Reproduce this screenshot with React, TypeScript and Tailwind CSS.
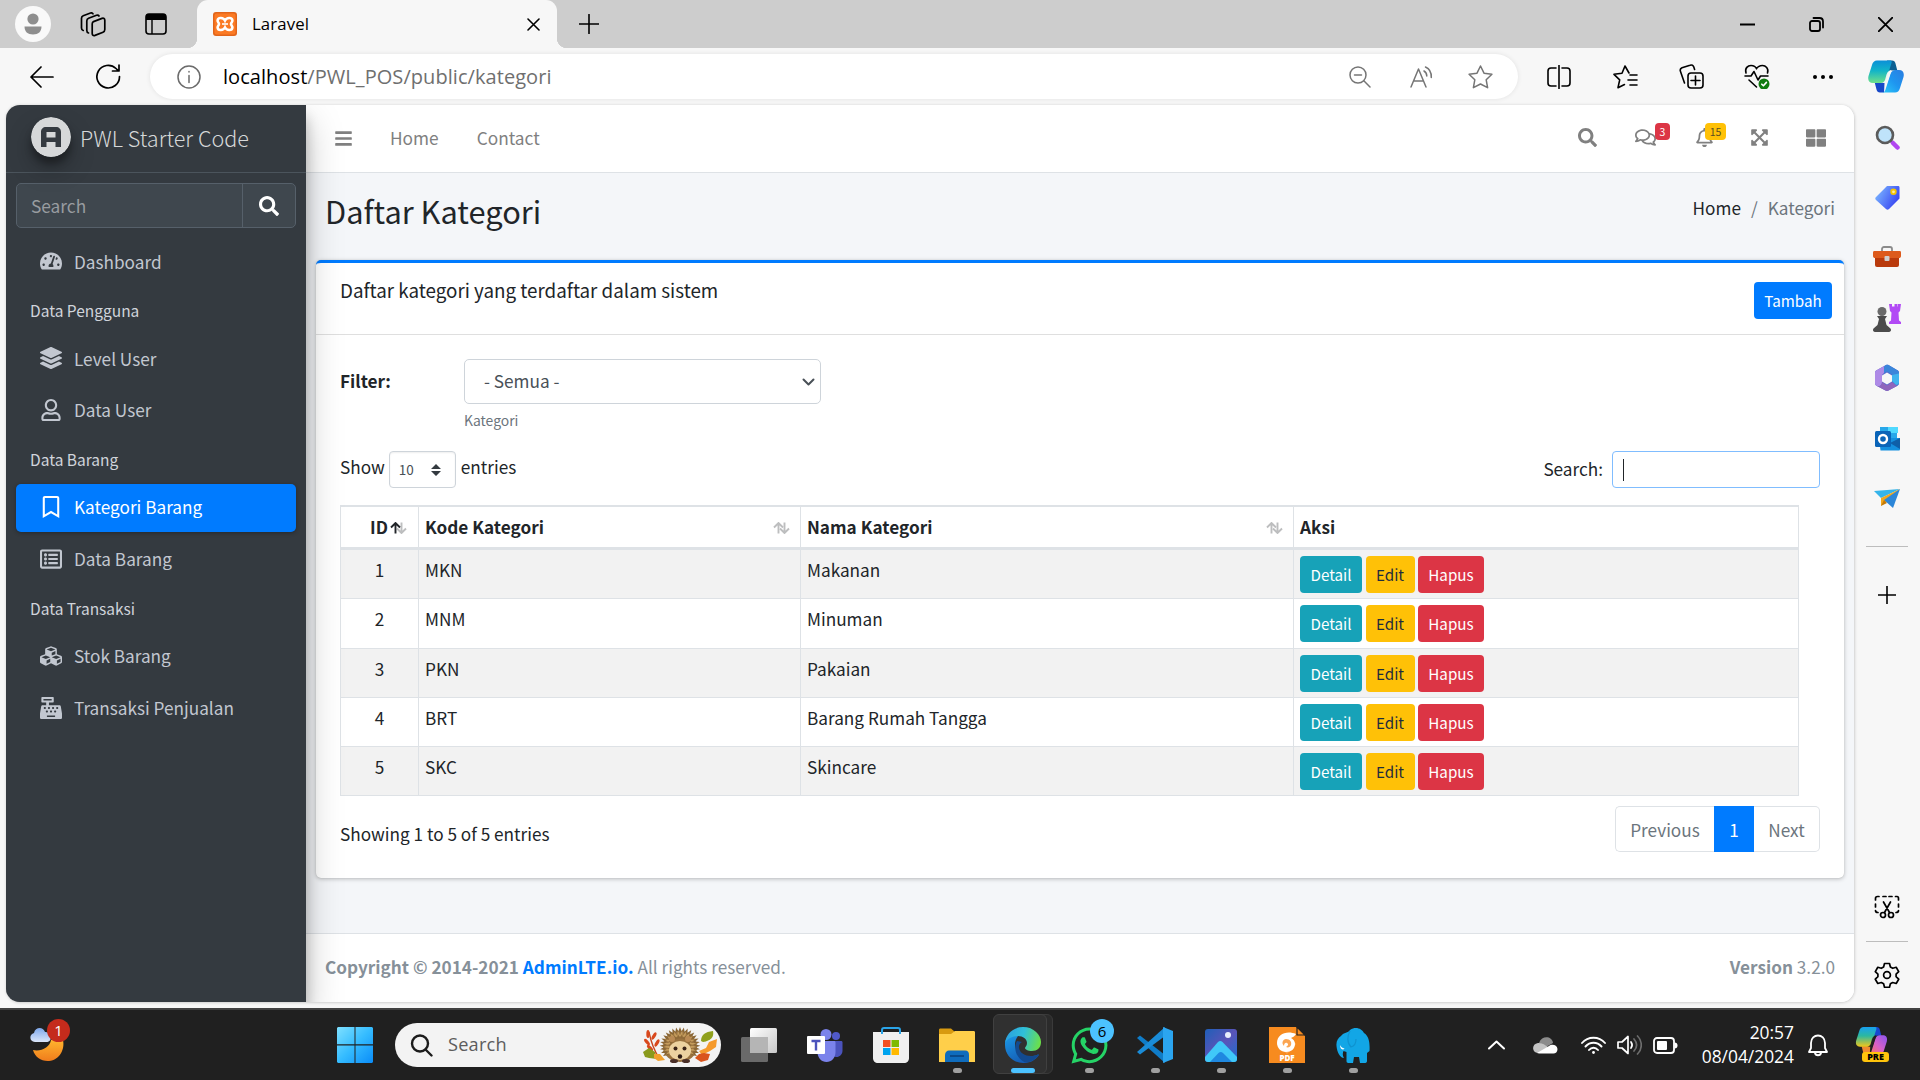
import type { ReactNode } from "react";
import {
  FaBars, FaSearch, FaRegComments, FaRegBell, FaExpandArrowsAlt, FaThLarge, FaTachometerAlt,
  FaLayerGroup, FaRegUser, FaRegBookmark, FaRegListAlt, FaCubes, FaCashRegister, FaWhatsapp,
} from "react-icons/fa";

type SvgProps = { w: number; h: number; vb?: string; sw?: number; className?: string; children: ReactNode };

function Line({ w, h, vb, sw = 1.5, className, children }: SvgProps) {
  return (
    <svg width={w} height={h} viewBox={vb ?? `0 0 ${w} ${h}`} fill="none" stroke="currentColor" strokeWidth={sw}
      strokeLinecap="round" strokeLinejoin="round" className={className}>
      {children}
    </svg>
  );
}

function Copilot({ w, h, id, warm }: { w: number; h: number; id: string; warm?: boolean }) {
  return (
    <svg width={w} height={h} viewBox="0 0 36 32">
      <defs>
        <linearGradient id={`${id}a`} x1="0" y1="0" x2="0" y2="1">
          <stop offset="0" stopColor={warm ? "#18a0f0" : "#0a8fd8"} />
          <stop offset="0.45" stopColor={warm ? "#2bb8a0" : "#12b4c8"} />
          <stop offset="1" stopColor={warm ? "#f2c81a" : "#6fe08a"} />
        </linearGradient>
        <linearGradient id={`${id}b`} x1="1" y1="0" x2="0" y2="1">
          <stop offset="0" stopColor={warm ? "#8a55f0" : "#2b7de0"} />
          <stop offset="0.5" stopColor={warm ? "#d860c8" : "#1e96f0"} />
          <stop offset="1" stopColor={warm ? "#ff7a4a" : "#2cc8f8"} />
        </linearGradient>
      </defs>
      <path d="M19 0h5c2 0 3 1 3.500 3l1.800 7h-6c-2 0-3 1-4 3z" fill={warm ? "#1648d0" : "#0c5f92"} />
      <path d="M16 32h-4c-2 0-3-1-3.500-3l-1.800-7h6c2 0 3-1 4-3z" fill={warm ? "#f08a30" : "#1748c8"} />
      <path d="M9 0h13c1.500 0 2 1 1.500 2.500l-5 16c-1 3-3 4-5 4H5c-4 0-5.500-3-4.500-7L4 4.500C4.800 1.500 6.500 0 9 0z" fill={`url(#${id}a)`} />
      <path d="M27 32H14c2 0 3-1 3.500-3l5-15.500c1-3 3-4 5-4H31c4 0 5.500 3 4.500 7L32 27.500c-.8 3-2.500 4.500-5 4.500z" fill={`url(#${id}b)`} />
      <path d="M18.500 14c1-3 3-4.500 5-4.500l-4.500 13H13c2 0 3.500-1.500 4-3z" fill={warm ? "#202020" : "#f7f7f7"} opacity={0.95} />
    </svg>
  );
}

function TitleBar() {
  return (
    <div className="flex h-12 items-center bg-[#cdcdcd] text-black">
      <div className="flex w-[197px] items-center">
        <svg width="36" height="36" viewBox="0 0 36 36" className="ml-[15px]">
          <circle cx="18" cy="18" r="18" fill="#f9f9f9" />
          <circle cx="18" cy="13" r="5.600" fill="#8e8e8e" />
          <path d="M9.500 20.500h17c0 5-3 8-8.500 8s-8.500-3-8.500-8z" fill="#8e8e8e" />
        </svg>
        <Line w={26} h={25} className="ml-[29px]" sw={1.700}>
          <path d="M13.500 9.600l8.500-3.200c1.700-.6 2.800.2 2.800 1.900v9.200c0 1.300-.6 2.200-1.800 2.700l-8 3.200c-1.700.6-2.800-.2-2.800-1.900V12c0-1.200.3-2 1.300-2.400z" />
          <path d="M8.500 21c-1-.3-1.700-1.200-1.700-2.500V9c0-1.300.6-2.200 1.800-2.700L16.500 3.200c1-.3 2-.1 2.500.8M3.200 18.500c-1-.3-1.700-1.200-1.700-2.500V6.200C1.500 5 2 4.200 3.200 3.700L10.500 1c1-.3 2-.1 2.500.8" />
        </Line>
        <svg width="22" height="22" viewBox="0 0 22 22" className="ml-[39px]">
          <rect x="1" y="1" width="20" height="20" rx="3" fill="none" stroke="#000" strokeWidth="1.600" />
          <path d="M1 7V3.500C1 2 2 1 3.500 1h15C20 1 21 2 21 3.500V7zM6.300 7h1.400v14H6.300z" />
        </svg>
      </div>
      <div className="relative flex h-12 w-[360px] items-center rounded-t-[11px] bg-[#f7f7f7]">
        <span className="absolute bottom-0 -left-[10px] size-[10px] bg-[radial-gradient(circle_at_0_0,transparent_10px,#f7f7f7_10.5px)]" />
        <span className="absolute -right-[10px] bottom-0 size-[10px] bg-[radial-gradient(circle_at_100%_0,transparent_10px,#f7f7f7_10.5px)]" />
        <svg width="24" height="24" viewBox="0 0 24 24" className="ml-4">
          <rect width="24" height="24" rx="3" fill="#e2651a" />
          <rect x="1.500" y="1.500" width="21" height="21" rx="2" fill="#fb7a24" />
          <g fill="none" stroke="#fff" strokeWidth="2.600">
            <path d="M12 8.500C10.500 5.500 5 5 4.600 8.400c-.1 2 1.400 2.200 1.400 3.600s-1.500 1.700-1.400 3.600C5 19 10.500 18.500 12 15.500c1.500 3 7 3.500 7.400.1.100-1.900-1.400-2.200-1.400-3.600s1.500-1.600 1.400-3.600C19 5 13.500 5.500 12 8.500z" />
            <path d="M9 12h6" strokeWidth="1.600" />
          </g>
        </svg>
        <span className="ml-[15px] text-[16.800px] tracking-[0.1px]">Laravel</span>
        <Line w={13} h={13} className="mr-[17px] ml-auto" sw={1.600}><path d="M1 1l11 11M12 1L1 12" /></Line>
      </div>
      <Line w={20} h={20} className="ml-[22px]" sw={1.600}><path d="M10 .5v19M.5 10h19" /></Line>
      <div className="ml-auto flex">
        <span className="flex w-[69px] items-center justify-center"><Line w={15} h={15} sw={1.800}><path d="M0 7.500h15" /></Line></span>
        <span className="flex w-[69px] items-center justify-center">
          <Line w={15} h={15} sw={1.800}><rect x="1" y="4" width="10" height="10" rx="2" /><path d="M4.500 1h6C13 1 14 2.500 14 4.500v6" /></Line>
        </span>
        <span className="flex w-[69px] items-center justify-center"><Line w={15} h={15} sw={1.800}><path d="M.5.500l14 14M14.500.500l-14 14" /></Line></span>
      </div>
    </div>
  );
}

function Slot({ children, className }: { children: ReactNode; className: string }) {
  return <span className={`flex items-center justify-center ${className}`}>{children}</span>;
}

function AddressBar() {
  return (
    <div className="flex h-[57px] items-center text-black">
      <Line w={25} h={22} className="ml-[29px]" sw={1.700}><path d="M24 11H2M12 1L2 11l10 10" /></Line>
      <Line w={25} h={25} className="ml-[42px]" sw={1.700}><path d="M23.500 12.500A11.300 11.300 0 1 1 20 4.500l2.500 2.300M23 1v6h-6.500" /></Line>
      <div className="ml-[29px] flex h-[45px] w-[1368px] items-center rounded-full bg-white pr-2 shadow-[0_0_5px_rgba(0,0,0,0.09)]">
        <Line w={24} h={24} className="ml-[27px] text-[#6b6b6b]" sw={1.500}><circle cx="12" cy="12" r="11" /><path d="M12 10.500v7M12 6.600v.3" /></Line>
        <span className="ml-[22px] text-[20px] tracking-[0.06px] text-[#6f6f6f]"><span className="text-black">localhost</span>/PWL_POS/public/kategori</span>
        <div className="ml-auto flex text-[#757575]">
          <Slot className="w-[60px]"><Line w={22} h={22} sw={1.500}><circle cx="9" cy="9" r="8" /><path d="M14.800 14.800L21 21M5.500 9h7" /></Line></Slot>
          <Slot className="w-[60px] pl-1"><Line w={24} h={22} sw={1.500}><path d="M1 21L8.500 3 16 21M3.800 15h9.500M14 5c1.700 1 2.700 2.500 2.800 5M15.500 1c3.500 1.500 6 5 5.800 10.500" /></Line></Slot>
          <Slot className="w-[60px]"><Line w={25} h={24} vb="0 0 25 24" sw={1.500}><path d="M12.500 1l3.500 7.200 7.900 1.100-5.700 5.500 1.400 7.900-7.100-3.700-7.100 3.700 1.400-7.900L1.100 9.300 9 8.200z" /></Line></Slot>
        </div>
      </div>
      <div className="ml-[8px] flex">
        <Slot className="w-[66px]"><Line w={24} h={24} sw={1.600}><path d="M9 3H4C2 3 1 4 1 6v12c0 2 1 3 3 3h5M15 3h5c2 0 3 1 3 3v12c0 2-1 3-3 3h-5M12 .5v23" /></Line></Slot>
        <Slot className="w-[66px]"><Line w={25} h={24} sw={1.600}><path d="M16 8L12 1 9 8.200 1 9.300l5.700 5.500L5 22.700l6.500-3.200M17 10h7M15 15h9M17 20h7" /></Line></Slot>
        <Slot className="w-[66px]"><Line w={25} h={25} sw={1.600}><rect x="9" y="9" width="15" height="15" rx="3" /><path d="M16.500 12v9M12 16.500h9M5.500 19L1.500 7.500c-.8-2 0-3 1.500-3.700L11 1.200c2-.7 3.200 0 3.800 1.800l.8 2.500" /></Line></Slot>
        <Slot className="w-[66px]">
          <Line w={26} h={25} sw={1.600}>
            <path d="M2 9C.5 4 4 1.500 7 1.500c3 0 5 2 5.500 3.300C13 3.500 15.500 1.500 18.500 1.500c3 0 6.500 3 5 7.500M1 12h6l3-4.500L14 16l2.500-4H24M5 16l7.500 7" />
            <circle cx="20" cy="20" r="5.500" fill="#107c10" stroke="none" />
            <path d="M17.800 20.200l1.600 1.600 3-3.400" stroke="#fff" />
          </Line>
        </Slot>
        <Slot className="w-[66px]"><svg width="22" height="6" viewBox="0 0 22 6"><circle cx="3" cy="3" r="2" /><circle cx="11" cy="3" r="2" /><circle cx="19" cy="3" r="2" /></svg></Slot>
        <Slot className="w-[60px]"><Copilot w={36} h={33} id="top" /></Slot>
      </div>
    </div>
  );
}

function NavItem({ icon, label, active }: { icon: ReactNode; label: string; active?: boolean }) {
  return (
    <div className={`mb-[3.8px] flex h-12 items-center rounded-[5px] pl-[19px] text-[17.200px] ${active ? "bg-[#007bff] text-white shadow-[0_1px_4px_rgba(0,0,0,0.3)]" : "text-[#c2c7d0]"}`}>
      <span className="flex w-8 justify-center pb-0.5 text-[22px]">{icon}</span>
      <span className="ml-[7px] pb-px leading-6">{label}</span>
    </div>
  );
}

function NavHeader({ label }: { label: string }) {
  return <div className="flex h-[45.3px] items-center pb-[3px] pl-[14px] text-[15.5px] text-[#d0d4db]">{label}</div>;
}

function Sidebar() {
  return (
    <aside className="relative z-10 h-[897px] w-[300px] bg-[#343a40] shadow-[0_17px_34px_rgba(0,0,0,0.25),0_12px_12px_rgba(0,0,0,0.22)]">
      <div className="flex h-[68px] items-center border-b border-[#4b545c] pl-[25px]">
        <svg width="40" height="40" viewBox="0 0 40 40" className="-mt-1 rounded-full shadow-[0_12px_24px_rgba(0,0,0,0.25),0_7px_7px_rgba(0,0,0,0.3)]">
          <circle cx="20" cy="20" r="20" fill="#d6d8d9" />
          <path d="M10 30V15c0-3 2-5 5-5h10c3 0 5 2 5 5v15h-5.500v-5h-9v5zM15.500 20.500h9V15h-9z" fill="#343a40" fillRule="evenodd" />
        </svg>
        <span className="ml-[9px] text-[21.600px] font-light text-[#d6d8d9]">PWL Starter Code</span>
      </div>
      <div className="px-[10px] pt-[10px]">
        <div className="mb-[10px] flex h-[45px] rounded-[5px] border border-[#56606a] bg-[#3f474e]">
          <span className="flex-1 self-center pl-[14px] text-[17.300px] text-[#989ca0]">Search</span>
          <span className="flex w-[53px] items-center justify-center border-l border-[#56606a] text-[20px] text-white"><FaSearch /></span>
        </div>
        <NavItem icon={<FaTachometerAlt />} label="Dashboard" />
        <NavHeader label="Data Pengguna" />
        <NavItem icon={<FaLayerGroup />} label="Level User" />
        <NavItem icon={<FaRegUser />} label="Data User" />
        <NavHeader label="Data Barang" />
        <NavItem icon={<FaRegBookmark />} label="Kategori Barang" active />
        <NavItem icon={<FaRegListAlt />} label="Data Barang" />
        <NavHeader label="Data Transaksi" />
        <NavItem icon={<FaCubes />} label="Stok Barang" />
        <NavItem icon={<FaCashRegister />} label="Transaksi Penjualan" />
      </div>
    </aside>
  );
}

function NavBar() {
  return (
    <div className="flex h-[68px] items-center border-b border-[#dee2e6] bg-white text-[17.300px] text-[#808080]">
      <FaBars className="ml-[28px] text-[19px]" />
      <span className="ml-[37px] pb-px">Home</span>
      <span className="ml-[38px] pb-px">Contact</span>
      <div className="ml-auto flex items-center pr-[28px] pb-0.5 text-[19px]">
        <FaSearch />
        <span className="relative ml-[38px]">
          <FaRegComments className="text-[21px]" />
          <span className="absolute -top-[4px] left-[20px] flex h-[17px] w-[15px] items-center justify-center rounded-[4px] bg-[#dc3545] text-[10.500px] text-white">3</span>
        </span>
        <span className="relative ml-[39px]">
          <FaRegBell />
          <span className="absolute -top-[5px] left-[10px] flex h-[17px] w-[21px] items-center justify-center rounded-[4px] bg-[#ffc107] text-[10.500px] text-[#5a5020]">15</span>
        </span>
        <FaExpandArrowsAlt className="ml-[36px]" />
        <FaThLarge className="ml-[37px] text-[20px]" />
      </div>
    </div>
  );
}

function SortArrows({ asc }: { asc?: boolean }) {
  return (
    <svg width="17" height="12" viewBox="0 0 17 12" fill="none" strokeWidth="1.900" className="relative top-px">
      <path d="M11.500 .5v10M7 6.500l4.500 4.500 4.500-4.500" stroke="#bdbebf" />
      <path d="M5.500 11.500v-10M1 5.500L5.500 1 10 5.500" stroke={asc ? "#212529" : "#bdbebf"} />
    </svg>
  );
}

const rows = [
  ["1", "MKN", "Makanan"],
  ["2", "MNM", "Minuman"],
  ["3", "PKN", "Pakaian"],
  ["4", "BRT", "Barang Rumah Tangga"],
  ["5", "SKC", "Skincare"],
];

function DataTable() {
  const cell = "border-r border-[#dee2e6]";
  return (
    <div className="w-[1459px] border-t-2 border-l border-[#dee2e6]">
      <div className="grid h-[43px] grid-cols-[78px_382px_493px_505px] border-b-[3px] border-[#dee2e6] text-[17.200px] font-bold">
        <div className={`${cell} flex items-center justify-end pr-[11px]`}>ID<span className="ml-0.5"><SortArrows asc /></span></div>
        <div className={`${cell} flex items-center justify-between pr-[10px] pl-[6px]`}>Kode Kategori<SortArrows /></div>
        <div className={`${cell} flex items-center justify-between pr-[10px] pl-[6px]`}>Nama Kategori<SortArrows /></div>
        <div className={`${cell} flex items-center pl-[6px]`}>Aksi</div>
      </div>
      {rows.map(([id, code, name]) => (
        <div key={id} className="grid h-[49.3px] grid-cols-[78px_382px_493px_505px] border-b border-[#dee2e6] odd:bg-white even:bg-[#f2f2f2]">
          <div className={`${cell} pt-[8px] text-center leading-6`}>{id}</div>
          <div className={`${cell} pt-[8px] pl-[6px] leading-6`}>{code}</div>
          <div className={`${cell} pt-[8px] pl-[6px] leading-6`}>{name}</div>
          <div className={`${cell} flex gap-[3.500px] pt-[6px] pl-[6px] text-[15.200px]`}>
            <span className="flex h-[37px] w-[62px] items-center justify-center rounded-[4px] bg-[#17a2b8] text-white">Detail</span>
            <span className="flex h-[37px] w-[49px] items-center justify-center rounded-[4px] bg-[#ffc107] text-[#1f2d3d]">Edit</span>
            <span className="flex h-[37px] w-[66px] items-center justify-center rounded-[4px] bg-[#dc3545] text-white">Hapus</span>
          </div>
        </div>
      ))}
    </div>
  );
}

function MainContent() {
  return (
    <main className="flex h-[897px] flex-1 flex-col bg-[#f4f6f9] text-[17.200px] text-[#212529]">
      <NavBar />
      <div className="flex h-[87px] justify-between px-[19px]">
        <h1 className="pt-[15px] text-[30.800px] leading-[46px]">Daftar Kategori</h1>
        <div className="pt-[23px] leading-6 text-[#6c757d]"><span className="text-[#212529]">Home</span><span className="px-[10px]">/</span>Kategori</div>
      </div>
      <section className="mr-[10px] ml-[10px] h-[618px] rounded-[5px] border-t-[3px] border-[#007bff] bg-white shadow-[0_0_1px_rgba(0,0,0,0.15),0_1px_4px_rgba(0,0,0,0.25)]">
        <div className="flex h-[72px] justify-between border-b border-[#dfdfdf] pr-[12px] pl-[24px]">
          <span className="pt-[15px] text-[18.800px] leading-6">Daftar kategori yang terdaftar dalam sistem</span>
          <span className="mt-[19px] flex h-[37px] w-[78px] items-center justify-center rounded-[4px] bg-[#007bff] pb-px text-[15.200px] text-white">Tambah</span>
        </div>
        <div className="pr-[24px] pl-[24px] pt-[24px]">
          <div className="flex">
            <span className="w-[124px] pt-[10px] font-bold leading-6">Filter:</span>
            <div>
              <div className="flex h-[45px] w-[357px] items-center justify-between rounded-[5px] border border-[#ced4da] pr-[5px] pl-[19px] text-[#495057]">
                <span className="pb-px">- Semua -</span>
                <Line w={13} h={8} sw={2}><path d="M1.500 1.500l5 5 5-5" /></Line>
              </div>
              <div className="pt-[4px] text-[13.900px] leading-6 text-[#6c757d]">Kategori</div>
            </div>
          </div>
          <div className="mt-[19px] flex h-[37px]">
            <span className="pt-[4px] leading-6">Show</span>
            <div className="ml-[4px] flex w-[67px] items-center justify-between rounded-[4px] border border-[#ced4da] pr-[14px] pl-[9px] text-[13.500px] text-[#495057] shadow-[inset_0_1px_2px_rgba(0,0,0,0.07)]">
              10
              <svg width="10" height="12" viewBox="0 0 10 12" fill="#343a40"><path d="M0 5L5 0l5 5zM0 7l5 5 5-5z" /></svg>
            </div>
            <span className="ml-[5px] pt-[4px] leading-6">entries</span>
            <span className="ml-auto pt-[6px] leading-6">Search:</span>
            <div className="ml-[9px] flex w-[208px] items-center rounded-[4px] border border-[#80bdff] pl-[10px]">
              <span className="h-[22px] w-px bg-[#212529]" />
            </div>
          </div>
          <div className="mt-[17px]"><DataTable /></div>
          <div className="mt-[10px] flex justify-between">
            <span className="pt-[16px] leading-6">Showing 1 to 5 of 5 entries</span>
            <div className="flex h-[46px] text-[#6c757d]">
              <span className="flex w-[99px] items-center justify-center rounded-l-[5px] border border-r-0 border-[#dee2e6]">Previous</span>
              <span className="flex w-[40px] items-center justify-center bg-[#007bff] text-white">1</span>
              <span className="flex w-[66px] items-center justify-center rounded-r-[5px] border border-l-0 border-[#dee2e6]">Next</span>
            </div>
          </div>
        </div>
      </section>
      <footer className="mt-auto flex h-[69px] items-center justify-between border-t border-[#dee2e6] bg-white px-[19px] pb-0.5 text-[#869099]">
        <span><b>Copyright © 2014-2021 <span className="text-[#007bff]">AdminLTE.io.</span></b> All rights reserved.</span>
        <span><b>Version</b> 3.2.0</span>
      </footer>
    </main>
  );
}

function EdgeSidebar() {
  return (
    <div className="flex w-[64px] flex-col items-center pt-[2px] pb-[20px]">
      <div className="flex flex-col items-center [&>span]:h-[60.2px]">
        <Slot className="w-12">
          <svg width="25" height="25" viewBox="0 0 25 25">
            <path d="M15.500 15.500l2 2" stroke="#555" strokeWidth="3" />
            <path d="M18 18l4.500 4.500" stroke="#b146f0" strokeWidth="4.500" strokeLinecap="round" />
            <circle cx="10" cy="10" r="8" fill="#bfe3fa" stroke="#5b5b5b" strokeWidth="2.600" />
          </svg>
        </Slot>
        <Slot className="w-12">
          <svg width="25" height="25" viewBox="0 0 25 25">
            <defs><linearGradient id="tag" x1="0" y1="0.300" x2="1" y2="0.800"><stop stopColor="#7ab4ff" /><stop offset="1" stopColor="#3038f0" /></linearGradient></defs>
            <path d="M12 1h11c1 0 1.500.5 1.500 1.500v11L14 24c-1 1-2 1-3 0L1 15c-1-1-1-2 0-3z" fill="url(#tag)" />
            <circle cx="18.500" cy="6.800" r="2.300" fill="#ffe9a0" stroke="#f5c400" strokeWidth="1.800" />
          </svg>
        </Slot>
        <Slot className="w-12">
          <svg width="28" height="22" viewBox="0 0 28 22">
            <path d="M9 6V3c0-1 .8-2 2-2h6c1.200 0 2 1 2 2v3" fill="none" stroke="#8b8b8b" strokeWidth="1.800" />
            <rect x="2" y="8" width="24" height="13" rx="2" fill="#b93a0c" />
            <path d="M0 6.500C0 5.500.5 5 1.500 5h25c1 0 1.500.5 1.500 1.500V10c0 1.500-1 2-2 2H2c-1 0-2-.5-2-2z" fill="#dd5a1c" />
            <rect x="11.500" y="10" width="5" height="5" rx="1" fill="#d0d0d0" />
          </svg>
        </Slot>
        <Slot className="w-12">
          <svg width="28" height="28" viewBox="0 0 28 28">
            <path d="M16 0h3v2.500h2.500V0h3v2.500H25V0h3l-1 7-1.500 1.500.5 8 2 1.500v2H16v-2l2-1.500.5-8L17 7z" fill="#b24af5" />
            <circle cx="9" cy="7.500" r="4.500" fill="#6a6a6a" />
            <path d="M4 12h10l-2 3 1.500 6 4 3.500c1 1.500.5 3.500-1.500 3.500H2c-2 0-2.500-2-1.500-3.500l4-3.500L6 15z" fill="#4c4c4c" />
          </svg>
        </Slot>
        <Slot className="w-12">
          <svg width="26" height="28" viewBox="0 0 26 28">
            <path d="M12 1c1-.5 1.500-.5 2.500 0L23 6c1.500.8 2 1.700 2 3v10c0 1.300-.6 2.200-2 3l-8.500 4.500c-1 .5-2 .5-3 0L3 22c-1.400-.8-2-1.700-2-3V9c0-1.300.5-2.200 2-3z" fill="#5568cc" />
            <path d="M12 1L3 6C1.500 6.800 1 7.700 1 9v10c0 1.300.6 2.200 2 3 3 1 5-1 5-4v-6c0-1.300.6-2 2-3V4c0-1.500.7-2.300 2-3z" fill="#ae8ae6" />
            <path d="M12 1c-1.300.7-2 1.500-2 3v5l3-1.500 5 3V17l5 4.500c1.500-.8 2-1.500 2-2.500V9c0-1.300-.5-2.200-2-3l-8.500-5c-1-.5-1.500-.5-2.500 0z" fill="#3a86da" />
            <path d="M18 11v6l4 4c2-.5 3-1 3-3V9.500z" fill="#3fb4ee" />
            <path d="M3 22c4 .8 5-2 5-4l5 3.500 5-3.500 5 4-8.500 4.500c-1 .5-2 .5-3 0z" fill="#8f66bc" />
            <path d="M13 8.500l5 3v6l-5 3-5-3v-6z" fill="#f7f7f7" />
          </svg>
        </Slot>
        <Slot className="w-12">
          <svg width="25" height="25" viewBox="0 0 25 25">
            <path d="M5 1h17v12H5z" fill="#28a8ea" /><path d="M13 1h10v6H13z" fill="#50d9ff" />
            <path d="M4 12h21v11c0 1-.5 1.500-1.500 1.500h-18z" fill="#1490df" /><path d="M25 12v11L15 17z" fill="#0f5fa8" />
            <rect y="5" width="16" height="16" rx="1.500" fill="#0a64b8" />
            <circle cx="8" cy="13" r="4" fill="none" stroke="#fff" strokeWidth="2.400" />
          </svg>
        </Slot>
        <Slot className="w-12">
          <svg width="26" height="20" viewBox="0 0 26 20">
            <path d="M26 1L0 3l7 7z" fill="#35b4ea" /><path d="M26 1L7 10v8z" fill="#f2a71c" />
            <path d="M26 1L10 12l9 8z" fill="#2c86d8" /><path d="M7 18l3-6 3 3z" fill="#c47a08" />
          </svg>
        </Slot>
      </div>
      <div className="mt-[18px] h-px w-[42px] bg-[#bdbdbd]" />
      <Line w={18} h={18} sw={1.600} className="mt-[39px]"><path d="M9 0v18M0 9h18" /></Line>
      <Line w={26} h={24} sw={1.700} className="mt-auto">
        <path d="M5 1.500H3.500c-1.200 0-2 .8-2 2V5M9 1.500h3M15 1.500h3M21.500 1.500H23c1 0 1.500.8 1.500 2V5M1.500 9v3M24.500 9v3M1.500 15.500C1.500 17 2 17.500 4 17.500M24.500 15.500c0 1.500-.5 2-2.500 2M9.500 7l6 10.500M16.500 7l-6 10.500" />
        <circle cx="9" cy="20" r="2.500" /><circle cx="17" cy="20" r="2.500" />
      </Line>
      <div className="mt-[22px] h-px w-[42px] bg-[#bdbdbd]" />
      <Line w={26} h={26} vb="0 0 26 26" sw={1.700} className="mt-[20px]">
        <path d="M10.500 1.500h5l.9 3.500 2.300 1.300 3.500-1 2.500 4.300-2.600 2.500v2.600l2.600 2.500-2.500 4.300-3.500-1-2.300 1.300-.9 3.500h-5l-.9-3.500-2.300-1.300-3.500 1-2.500-4.300 2.600-2.500v-2.600L1.300 9.600l2.500-4.300 3.500 1L9.600 5z" />
        <circle cx="13" cy="13" r="3.400" />
      </Line>
    </div>
  );
}

function TaskbarApp({ children, run }: { children: ReactNode; run?: boolean }) {
  return (
    <div className="relative flex h-full w-[66px] items-center justify-center">
      {children}
      {run && <span className="absolute bottom-[7px] h-[5px] w-[9px] rounded-full bg-[#a0a0a0]" />}
    </div>
  );
}

function spikeRing(count: number, base: number, tip: number, half: number) {
  return Array.from({ length: count }, (_, i) => {
    const a = Math.PI * (0.82 + (i * 1.36) / (count - 1));
    const point = (r: number, d: number) => `${(37 + r * 1.05 * Math.cos(a + d)).toFixed(1)} ${(19 + r * 0.98 * Math.sin(a + d)).toFixed(1)}`;
    return `M${point(base, -half)}L${point(tip, 0)}L${point(base, half)}z`;
  }).join("");
}

function Hedgehog() {
  return (
    <svg width="75" height="36" viewBox="0 0 75 36">
      <path d="M16 31Q9 20 6 5" stroke="#c8431c" strokeWidth="1.300" fill="none" />
      <g fill="#d9481c"><ellipse cx="5" cy="7" rx="1.700" ry="4" /><ellipse cx="11" cy="9" rx="1.700" ry="4" transform="rotate(30 11 9)" /><ellipse cx="4" cy="15" rx="1.700" ry="4" transform="rotate(-40 4 15)" /><ellipse cx="14" cy="16" rx="1.700" ry="4" transform="rotate(30 14 16)" /><ellipse cx="7" cy="21" rx="1.700" ry="4" transform="rotate(-45 7 21)" /></g>
      <path d="M0 25l6-4 6 4 2 7-8-1-4-1z" fill="#8a9a1c" />
      <path d="M11 27l6 0 5 6-7 1-4-3z" fill="#f2a02c" />
      <ellipse cx="37" cy="20" rx="17" ry="15" fill="#9a7340" />
      <path d={spikeRing(23, 14, 19.3, 0.14)} fill="#8a6635" />
      <path d={spikeRing(18, 10, 16, 0.16)} fill="#c49c5c" />
      <path d={spikeRing(14, 8, 12.5, 0.2)} fill="#8f6a38" />
      <circle cx="29" cy="12" r="3" fill="#b98a54" /><circle cx="45" cy="12" r="3" fill="#b98a54" />
      <ellipse cx="37" cy="23.500" rx="11" ry="9.500" fill="#ecd2a0" />
      <circle cx="32.500" cy="21.500" r="2" fill="#3a2418" /><circle cx="41.500" cy="21.500" r="2" fill="#3a2418" /><circle cx="37" cy="29.500" r="2.200" fill="#2c1a12" />
      <ellipse cx="31" cy="34" rx="4" ry="2" fill="#4a2f28" /><ellipse cx="43" cy="34" rx="4" ry="2" fill="#4a2f28" />
      <path d="M58 14Q58 5 70 4Q72 13 60 15z" fill="#8fa01c" />
      <path d="M56 24l7-3 3-6 8-3-1 8-6 4-8 4z" fill="#f59a2c" />
      <path d="M52 31l4-4 5-1 6 1-2 6-7 2z" fill="#d9541c" />
    </svg>
  );
}

function Taskbar() {
  return (
    <div className="relative flex h-[72px] items-center border-t-2 border-[#424242] bg-[#202020] font-['Open_Sans','Noto_Sans',sans-serif] text-white">
      <div className="relative -mt-2 ml-[30px] size-[42px]">
        <svg width="42" height="42" viewBox="0 0 42 42">
          <defs>
            <linearGradient id="moon" x1="0" y1="0" x2="0" y2="1"><stop stopColor="#ffb52e" /><stop offset="1" stopColor="#f07c1c" /></linearGradient>
            <linearGradient id="wc" x1="0" y1="0" x2="0" y2="1"><stop stopColor="#7ea8ec" /><stop offset="1" stopColor="#dbe6fa" /></linearGradient>
          </defs>
          <path d="M33 20c2 9-3 20-14 21-8 .5-14-4-16-11 8 2 17-3 18-10z" fill="url(#moon)" />
          <path d="M5 22c-6 0-6-8-1-9C5 7 13 6 15 12c6-1 9 10 1 10z" fill="url(#wc)" />
        </svg>
        <span className="absolute -top-[1px] left-[17px] flex size-[23px] items-center justify-center rounded-full bg-[#c42b1c] text-[15px]">1</span>
      </div>
      <svg width="36" height="36" viewBox="0 0 36 36" className="ml-[265px]">
        <defs><linearGradient id="win" x1="0" y1="0" x2="1" y2="1"><stop stopColor="#7fe0ff" /><stop offset="0.500" stopColor="#35bcff" /><stop offset="1" stopColor="#0a8cf8" /></linearGradient></defs>
        <path d="M1 0h16.500v17.300H0V1zM18.500 0H35l1 1v16.300H18.500zM0 18.500h17.500V36H1l-1-1zM18.500 18.500H36V35l-1 1H18.500z" fill="url(#win)" />
      </svg>
      <div className="ml-[22px] flex h-[44px] w-[326px] items-center rounded-full bg-[#f3f3f3]">
        <Line w={23} h={23} sw={2.400} className="ml-[15px] text-[#1c1c1c]"><circle cx="10" cy="9.500" r="8" /><path d="M15.500 15.500L21.500 21.500" /></Line>
        <span className="ml-[15px] pb-px text-[18.200px] tracking-[0.2px] text-[#5c5c5c]">Search</span>
        <span className="mr-[3px] ml-auto"><Hedgehog /></span>
      </div>
      <div className="ml-[5px] flex h-full">
        <TaskbarApp>
          <svg width="36" height="34" viewBox="0 0 36 34">
            <defs>
              <linearGradient id="tv" x1="0" y1="0" x2="1" y2="1"><stop stopColor="#fff" /><stop offset="1" stopColor="#c8c8c8" /></linearGradient>
            </defs>
            <rect x="9" width="27" height="25" rx="1.500" fill="url(#tv)" /><rect y="9" width="27" height="25" rx="1.500" fill="#6a6a6a" /><path d="M9 9h18v16H9z" fill="#b5b5b5" />
          </svg>
        </TaskbarApp>
        <TaskbarApp>
          <svg width="36" height="33" viewBox="0 0 36 33">
            <circle cx="29" cy="7" r="4" fill="#5059c9" /><path d="M24 12h10c1 0 1.500.5 1.500 1.500v8c0 4-3 6.500-6 6.500s-5-2-5.500-4z" fill="#4b53bc" />
            <circle cx="19" cy="5.500" r="5.500" fill="#7b83eb" /><path d="M11 12h16c1 0 1.500.5 1.500 1.500V23c0 6-4 10-9 10s-9-4-9-10z" fill="#7b83eb" />
            <rect y="7" width="18" height="18" rx="1" fill="#fff" /><path d="M4.500 12h9M9 12v9.500" stroke="#4b53bc" strokeWidth="2.400" />
          </svg>
        </TaskbarApp>
        <TaskbarApp>
          <svg width="36" height="36" viewBox="0 0 36 36">
            <path d="M9 8V3c0-1 .5-2 2-2h14c1.500 0 2 1 2 2v5" fill="none" stroke="#2aa4e8" strokeWidth="2" />
            <path d="M0 5h36v26c0 3-2 5-5 5H5c-3 0-5-2-5-5z" fill="#f0f0f0" /><path d="M9 7V4M27 7V4" stroke="#2aa4e8" strokeWidth="2" />
            <path d="M10 13h7.500v7H10z" fill="#f25022" /><path d="M18.500 13H26v7h-7.500z" fill="#7fba00" /><path d="M10 21h7.500v7H10z" fill="#00a4ef" /><path d="M18.500 21H26v7h-7.500z" fill="#ffb900" />
          </svg>
        </TaskbarApp>
        <TaskbarApp run>
          <svg width="36" height="34" viewBox="0 0 36 34">
            <path d="M0 8V2C0 1 .5.500 1.500.500H12L16 4v4z" fill="#d89a10" /><path d="M0 6h12l4-3h18.500c1 0 1.500.5 1.500 1.500V34H0z" fill="#ffcf4a" />
            <path d="M6 34V27c0-3 2-4.500 4-4.500h16c3 0 4 1.500 4 4.500v7z" fill="#0f6cbd" /><path d="M11 28h14" stroke="#0a4a8a" strokeWidth="2" />
          </svg>
        </TaskbarApp>
        <div className="relative flex h-full w-[66px] items-center justify-center">
          <span className="absolute top-[4px] left-[9px] h-[60px] w-[54px] rounded-[6px] border border-[#3a3a3a] bg-[#2b2b2b]" />
          <span className="absolute top-[4px] left-[3px] h-[60px] w-[54px] rounded-[6px] border border-[#404040] bg-[#303030]" />
          <span className="absolute bottom-[7px] left-[21px] h-[5px] w-[24px] rounded-full bg-[#4cc2ff]" />
          <svg width="36" height="36" viewBox="0 0 36 36" className="relative">
            <defs>
              <linearGradient id="eg" x1="0" y1="0.300" x2="1" y2="0.500"><stop stopColor="#2a9fe0" /><stop offset="0.500" stopColor="#30c0d8" /><stop offset="1" stopColor="#6be04a" /></linearGradient>
              <linearGradient id="eb" x1="0" y1="0" x2="0.600" y2="1"><stop stopColor="#1c9ae8" /><stop offset="1" stopColor="#1458b0" /></linearGradient>
            </defs>
            <path d="M0 16C1 8 8 7 13 9c-3 4-4 9-2 13 3 7 12 10 22 5.500.8-.3 1 .3.600 1C30 33.500 25 36 18 36 8 36 0 28 0 18z" fill="url(#eb)" />
            <path d="M12 14c-4 7-1 17 8 21.500 6 0 10-3 13.500-7 .4-.7.200-1.300-.6-1C25 31 15 28 14 21c-.4-3 1-5 3-6z" fill="#124a90" />
            <path d="M0 16C1 7 8 0 18 0c11 0 18 8 18 15 0 6-4 9-9 9-4 0-7-1.500-7-3 0-1 2-2 2-5 0-4-4-7-9-7C7 9 2 12 0 16z" fill="url(#eg)" />
          </svg>
        </div>
        <TaskbarApp run>
          <FaWhatsapp className="text-[41px] text-[#25d366]" />
          <span className="absolute top-[9px] left-[34px] flex size-6 items-center justify-center rounded-full bg-[#4cc2ff] text-[15px] text-black">6</span>
        </TaskbarApp>
        <TaskbarApp run>
          <svg width="36" height="36" viewBox="0 0 36 36">
            <path d="M0 11l3-2.500L28 28v8z" fill="#0f7cc8" /><path d="M0 25l3 2.500L28 9V0z" fill="#1a8cd8" />
            <path d="M26 0l10 4v28l-10 4z" fill="#2ba5f0" />
          </svg>
        </TaskbarApp>
        <TaskbarApp run>
          <svg width="32" height="33" viewBox="0 0 32 33">
            <defs><linearGradient id="ph" x1="0" y1="0" x2="1" y2="1"><stop stopColor="#1f5fb8" /><stop offset="0.500" stopColor="#5a54b8" /><stop offset="1" stopColor="#1a6fd0" /></linearGradient></defs>
            <rect width="32" height="33" rx="3" fill="url(#ph)" /><path d="M0 28l13-15c1.500-1.500 3-1.500 4.500 0L32 28v2c0 2-1 3-3 3H3c-2 0-3-1-3-3z" fill="#40c8f8" />
            <path d="M5 33l8.500-9c1.500-1.500 3-1.500 4.500 0l9 9z" fill="#1f88e0" /><circle cx="23" cy="6" r="3" fill="#e8eefc" />
          </svg>
        </TaskbarApp>
        <TaskbarApp run>
          <svg width="36" height="36" viewBox="0 0 36 36">
            <path d="M0 0h27l9 9v27H0z" fill="#f78b1f" /><path d="M28 0l8 8h-8z" fill="#f78b1f" stroke="#202020" strokeWidth="1.200" />
            <path d="M18 7l9 10-9 10-10-10z" fill="#fba552" />
            <path d="M27 7c-9-4-19 0-19 9 0 5 4 9 9 9s9-3 9-8c0-3-2-5-4-6 2-1 4-2 5-4zM17 12c4 0 6 3 5 6-.6 2-3 3-5 2 2-1 3-3 1-4-2-.6-3 1-3 3-3-3-1-7 2-7z" fill="#fff" fillRule="evenodd" />
            <text x="18" y="34" textAnchor="middle" fontSize="8" fontWeight="800" fill="#fff" fontFamily="Open Sans, sans-serif">PDF</text>
          </svg>
        </TaskbarApp>
        <TaskbarApp run>
          <svg width="34" height="35" viewBox="0 0 34 35">
            <path d="M5 8C8 4 12 5 14 2c6-4 12-1 14 3 5 3 6 10 5.500 18L31 25v8c0 1.500-1 2-2.500 2H24l-1-6h-5l-1 6h-4.500c-1.500 0-2-1-2-2V24l-3-1c-1 2-1 5 .5 7C4 30 1 24 .5 18 0 13 2 10 5 8z" fill="#12a6e6" />
            <path d="M14 3c-3 5-3 12 1 16 4-1 5-4 5-8" stroke="#0f93d0" fill="none" strokeWidth="1.200" />
            <path d="M4 17c1 2 2 3 4.500 3.500C7.500 22.500 4 21.500 4 17z" fill="#fff" />
          </svg>
        </TaskbarApp>
      </div>
      <div className="ml-auto flex items-center">
        <Line w={17} h={10} sw={2}><path d="M1 8.500L8.500 1.500 16 8.500" /></Line>
        <svg width="25" height="17" viewBox="0 0 25 17" className="ml-[28px]">
          <path d="M6 6c3-8 13-7 14 0l-7 4z" fill="#8c8c8c" /><path d="M5 16C-1 16-2 7 5 6c4-.5 7 2 10 4L8 16z" fill="#c4c4c4" /><path d="M4 16l12-7c2-2 8-2 8.500 3 0 3-2 4.500-4 4.500H6z" fill="#fff" />
        </svg>
        <Line w={25} h={19} sw={1.900} className="ml-[23px]">
          <path d="M1 7C7 0 18 0 24 7M4.500 10.500c4.500-5 11.500-5 16 0M8 14c2.500-3 6.500-3 9 0" /><circle cx="12.500" cy="16.500" r="1.400" fill="currentColor" stroke="none" />
        </Line>
        <Line w={25} h={20} sw={1.700} className="ml-[11px]">
          <path d="M1 7h4l6-5.500v17L5 13H1zM14 7c1.500 2 1.500 4 0 6" /><path d="M17 4c3.500 4 3.500 8 0 12M20.500 1c5 5 5 13 0 18" stroke="#6e6e6e" />
        </Line>
        <svg width="25" height="17" viewBox="0 0 25 17" className="ml-[11px]">
          <rect x="1" y="1" width="20" height="15" rx="3" fill="none" stroke="#fff" strokeWidth="1.800" /><rect x="4" y="4" width="10" height="9" rx="1" fill="#fff" /><path d="M21.500 5.500c2 0 3 1 3 3s-1 3-3 3z" fill="#fff" />
        </svg>
        <div className="ml-[19px] w-[97px] pb-0.5 text-right text-[17.400px] leading-6">20:57<br />08/04/2024</div>
        <Line w={20} h={23} sw={1.800} className="ml-[14px]"><path d="M1 18l2-4V9c0-10 14-10 14 0v5l2 4zM7 19c.5 3 5.500 3 6 0" /></Line>
        <div className="relative mr-[31px] ml-[26px] h-[36px] w-[35px]">
          <Copilot w={35} h={28} id="tb" warm />
          <span className="absolute right-0 bottom-[1px] flex h-[10px] w-[27px] items-center justify-center rounded-[3px] bg-[#ffc40c] text-[9px] font-extrabold text-black">PRE</span>
        </div>
      </div>
    </div>
  );
}

export default function App() {
  return (
    <div className="flex h-[1080px] w-[1920px] flex-col overflow-hidden bg-[#f7f7f7] font-['Open_Sans','Noto_Sans',sans-serif]">
      <TitleBar />
      <AddressBar />
      <div className="flex h-[903px]">
        <div className="ml-[6px] flex h-[898px] w-[1849px] overflow-hidden rounded-[14px] border-r border-b border-[#dcdcdc] font-['Noto_Sans_CJK_JP',sans-serif] shadow-[0_0_3px_rgba(0,0,0,0.15)]">
          <Sidebar />
          <MainContent />
        </div>
        <EdgeSidebar />
      </div>
      <Taskbar />
    </div>
  );
}
